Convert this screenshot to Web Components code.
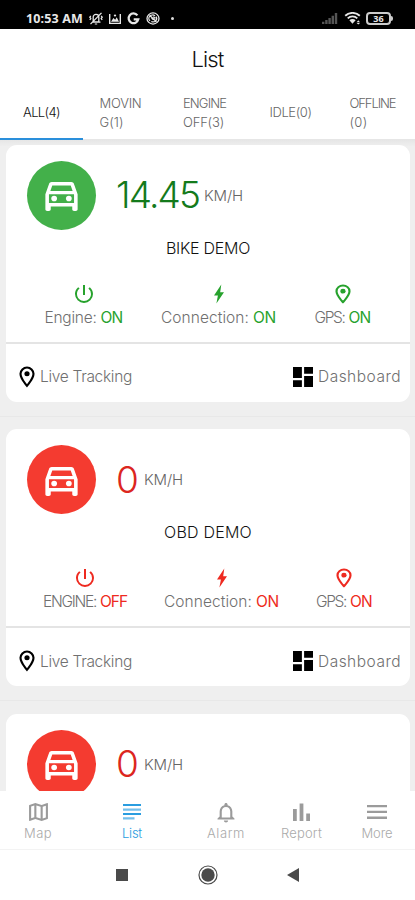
<!DOCTYPE html>
<html lang="en">
<head>
<meta charset="utf-8">
<title>List</title>
<style>
html,body{margin:0;height:100%}
body{width:415px;height:900px;overflow:hidden;background:#efefef;font-family:Inter,"Liberation Sans",sans-serif;font-weight:300}
</style>
</head>
<body>
<tracker-app></tracker-app>
<script>
const make = (name, html, setup) => customElements.define(name, class extends HTMLElement {
  connectedCallback() {
    if (this.shadowRoot) return;
    const t = document.createElement('template');
    t.innerHTML = typeof html === 'function' ? html(this) : html;
    this.attachShadow({mode: 'open'}).append(t.content.cloneNode(true));
    if (setup) setup(this);
  }
});
const attr = (el, n) => el.getAttribute(n) || '';

const icons = {
  car: ['0 0 24 24', '<path d="M18.92 5.01C18.72 4.42 18.16 4 17.5 4h-11c-.66 0-1.21.42-1.42 1.01L3 11v8.5c0 .55.45 1 1 1h1c.55 0 1-.45 1-1V18h12v1.5c0 .55.45 1 1 1h1c.55 0 1-.45 1-1V11l-2.08-5.99zM6.85 6h10.29l1.08 3.1H5.77L6.85 6zM19 16H5v-5h14v5z"/><circle cx="7.9" cy="13.4" r="1.6"/><circle cx="16.1" cy="13.4" r="1.6"/>'],
  power: ['2 2 20 20', '<path d="M13 3h-2v10h2V3zm4.83 2.17l-1.42 1.42A6.92 6.92 0 0 1 19 12c0 3.87-3.13 7-7 7s-7-3.13-7-7c0-2.19 1.01-4.14 2.58-5.42L6.17 5.17A8.93 8.93 0 0 0 3 12a9 9 0 0 0 18 0c0-2.74-1.23-5.18-3.17-6.83z"/>'],
  bolt: ['0 0 12 20', '<path d="M8.3 .6L1 11.4h3.9L3.4 19.4 11 8.2H7.2z"/>'],
  pin: ['4.6 1.5 14.8 21', '<path d="M12 2a7 7 0 0 0-7 7c0 5.25 7 13 7 13s7-7.75 7-13a7 7 0 0 0-7-7zM7 9a5 5 0 0 1 10 0c0 2.88-2.88 7.19-5 9.88C9.92 16.21 7 11.85 7 9z"/><circle cx="12" cy="9" r="2.4"/>'],
  dash: ['3 3 18 18', '<path d="M3 13h8V3H3v10zm0 8h8v-6H3v6zm10 0h8V11h-8v10zm0-18v6h8V3h-8z"/>'],
  map: ['2 2 20 20', '<path d="M20.5 3l-.16.03L15 5.1 9 3 3.36 4.9c-.21.07-.36.25-.36.48V20.5c0 .28.22.5.5.5l.16-.03L9 18.9l6 2.1 5.64-1.9c.21-.07.36-.25.36-.48V3.5c0-.28-.22-.5-.5-.5zM10 5.47l4 1.4v11.66l-4-1.4V5.47zm-5 .99l3-1.01v11.7l-3 1.16V6.46zm14 11.08l-3 1.01V6.86l3-1.16v11.84z"/>'],
  list: ['0 0 18 16', '<path d="M0 0h18v2H0zM0 9h18v2H0z"/><path opacity=".65" d="M0 4.5h18v2.2H0zM0 13.3h11.5v2.2H0z"/>'],
  bell: ['3.5 1.5 17 21', '<path d="M12 22c1.1 0 2-.9 2-2h-4c0 1.1.9 2 2 2zm6-6v-5c0-3.07-1.63-5.64-4.5-6.32V4c0-.83-.67-1.5-1.5-1.5s-1.5.67-1.5 1.5v.68C7.64 5.36 6 7.92 6 11v5l-2 2v1h16v-1l-2-2zm-2 1H8v-6c0-2.48 1.51-4.5 4-4.5s4 2.02 4 4.5v6z"/>'],
  chart: ['0 0 18 18', '<path d="M0 6h4v12H0zM7 .6h4V18H7zM14 10.5h4V18h-4z"/>'],
  menu: ['0 0 20 14', '<path d="M0 0h20v2.3H0zM0 5.8h20v2.3H0zM0 11.6h20v2.3H0z"/>'],
  mute: ['0 0 14 14', '<g fill="none" stroke="currentColor" stroke-width="1.3"><path d="M3 11h8.5M4.2 10.5V5.4C4.2 3.6 5.4 2.6 7 2.6s2.8 1 2.8 2.8v5.1zM5.8 12.9h2.4M1.8 4.2l-1 1.4 1 1.4-1 1.5M12.2 4.2l1 1.4-1 1.4 1 1.5M1.5 13L12.5 1"/></g>'],
  pic: ['0 0 12 12', '<path d="M0 1h1.4v9.6h9.2V1H12v11H0z"/><path d="M2 9.5l2.4-4 1.8 1.8 1.5-2.6 2.3 4.8z"/><circle cx="6" cy="2.7" r="1.2"/>'],
  goog: ['0 0 12 12', '<path d="M9.6 3.1A4.5 4.5 0 1 0 10.4 6.8H6.2" fill="none" stroke="currentColor" stroke-width="2.1"/>'],
  ring: ['0 0 14 14', '<g fill="none" stroke="currentColor" stroke-width="1.3"><circle cx="7" cy="7" r="6"/><path d="M4 9.5a3.6 3.6 0 0 1 5-5.3M10 5a3.6 3.6 0 0 1-4.7 5.2M3.5 3.5l7 7M5.5 6.5l2 2M7.3 5l2 2"/></g>'],
  signal: ['0 0 16 12', '<path d="M0 9.5h2.4V12H0zM3.2 7.6h2.4V12H3.2zM6.4 5.4h2.4V12H6.4zM9.6 3h2.4v9H9.6zM12.8 0h2.4v12h-2.4z"/>'],
  wifi: ['0 1 17 13.2', '<g fill="none" stroke="currentColor" stroke-width="1.8"><path d="M1.2 4.8a10.5 10.5 0 0 1 14.6 0M3.7 7.4a7 7 0 0 1 9.6 0"/></g><path d="M5.4 9.4a4.4 4.4 0 0 1 6.2 0L8.5 13z"/><path d="M12.6 11.5l1.7-2 1.7 2zM12.6 12.1l1.7 1.7 1.7-1.7z"/>'],
  square: ['0 0 12 12', '<path d="M0 0h12v12H0z"/>'],
  home: ['0 0 20 20', '<circle cx="10" cy="10" r="9" fill="none" stroke="currentColor" stroke-width="1.2"/><circle cx="10" cy="10" r="6.7"/>'],
  back: ['0 0 12 14', '<path d="M12 0v14L0 7z"/>']
};

make('ui-icon', el => `<style>:host{display:block;flex:none;width:${attr(el,'w')}px;height:${attr(el,'h')}px}svg{display:block;width:100%;height:100%;fill:currentColor}</style>
<svg viewBox="${icons[attr(el,'name')][0]}" preserveAspectRatio="none">${icons[attr(el,'name')][1]}</svg>`);

make('status-bar', `<style>
:host{display:flex;align-items:center;box-sizing:border-box;height:29px;padding:9px 22px 0 26px;background:#000;color:#e8e8e8;font-family:"Noto Sans",Roboto,sans-serif;font-weight:700;font-size:12.5px}
.sp{flex:1}.dot{width:3px;height:3px;border-radius:50%;background:#ddd;margin-left:11px}
ui-icon{margin-left:6px}.sig{color:#555}
.bat{flex:none;box-sizing:border-box;width:25px;height:13px;margin-left:5px;border:2px solid #ccc;border-radius:4px;display:grid;place-items:center;font-size:9px;line-height:8px}
.tip{flex:none;width:2px;height:5px;background:#ccc;border-radius:0 2px 2px 0}
</style>
<fit-text w="57">10:53 AM</fit-text><ui-icon name="mute" w="14" h="13"></ui-icon><ui-icon name="pic" w="12" h="11"></ui-icon><ui-icon name="goog" w="13" h="13"></ui-icon><ui-icon name="ring" w="14" h="13"></ui-icon><div class="dot"></div><div class="sp"></div>
<ui-icon class="sig" name="signal" w="16" h="11"></ui-icon><ui-icon name="wifi" w="17" h="13"></ui-icon><div class="bat">36</div><div class="tip"></div>`);

make('app-header', `<style>:host{display:grid;place-items:center;height:60px;background:#fff;color:#111;font-size:22px;font-weight:300}</style><fit-text w="32"><slot></slot></fit-text>`);

make('tab-item', `<style>:host{display:flex;flex-direction:column;justify-content:center;align-items:center;box-sizing:border-box;height:51px;color:#666;font-size:13px;line-height:19px;border-bottom:2px solid transparent}
:host([active]){border-color:#2a8fdb;color:#111}div{display:flex;flex-direction:column;align-items:flex-start;padding-bottom:1px}</style><div><slot></slot></div>`);
make('tab-bar', `<style>:host{display:grid;grid-template-columns:repeat(5,83px);height:50px;background:#fff;border-bottom:1px solid #e6e6e6}tab-item{height:50px}</style><slot></slot>`);

make('status-stat', el => `<style>:host{display:flex;flex-direction:column;align-items:center;font-size:15.5px;line-height:20px;color:#707070}
.i{height:24px;display:flex;align-items:center;color:var(--accent)}.r{display:flex;gap:4px;padding-top:2px}.v{color:var(--accent);font-weight:400}</style>
<div class="i"><ui-icon name="${attr(el,'icon')}" w="${attr(el,'iw')}" h="20"></ui-icon></div>
<div class="r"><fit-text w="${attr(el,'lw')}">${attr(el,'label')}</fit-text><fit-text class="v" w="${attr(el,'vw')}">${attr(el,'value')}</fit-text></div>`);

make('vehicle-card', el => `<style>
:host{display:block;width:404px;height:257px;background:#fff;border-radius:11px;overflow:hidden}
.top{display:flex;align-items:center;height:69px;padding:16px 0 0 21px}
.disc{display:grid;place-items:center;box-sizing:border-box;padding-top:2px;width:69px;height:69px;border-radius:50%;background:var(--disc);color:#fff}
.speed{margin-left:20px;font-size:37px;line-height:44px;color:var(--speed);font-weight:270}
.unit{margin-left:5px;font-size:15px;color:#666}
.name{display:grid;place-items:center;height:36px;color:#111;font-size:16px;font-weight:350}
.stats{display:flex;justify-content:space-evenly;height:60px;padding:16px 1px 0 0;border-bottom:2px solid #e4e4e4}
.links{display:flex;justify-content:space-between;align-items:center;height:64px;padding:1px 9px 0 13px;font-size:15.5px;color:#777}
.link{display:flex;align-items:center;gap:5px;color:#000}.link fit-text{color:#707070}
</style>
<div class="top"><div class="disc"><ui-icon name="car" w="43" h="42"></ui-icon></div>
<fit-text class="speed" w="${attr(el,'sw')}">${attr(el,'speed')}</fit-text><fit-text class="unit" w="39">KM/H</fit-text></div>
${el.hasAttribute('brief') ? '' : `<div class="name"><fit-text w="${attr(el,'nw')}">${attr(el,'name')}</fit-text></div>
<div class="stats"><slot></slot></div>
<div class="links"><div class="link"><ui-icon name="pin" w="16" h="22"></ui-icon><fit-text w="92">Live Tracking</fit-text></div>
<div class="link"><ui-icon name="dash" w="20" h="20"></ui-icon><fit-text w="83">Dashboard</fit-text></div></div>`}`);

make('vehicle-list', `<style>:host{display:block;height:652px;overflow:hidden;background:#efefef}
.flow{display:grid;justify-content:center;padding:5px 5px 0 6px;grid-auto-rows:284.5px}
::slotted(*){align-self:start}
.flow{background:linear-gradient(#e8e8e8,#e8e8e8) 0 276px/100% 1px no-repeat,linear-gradient(#e8e8e8,#e8e8e8) 0 560px/100% 1px no-repeat,linear-gradient(#e6e6e6,#eee) 0 0/100% 6px no-repeat}</style><div class="flow"><slot></slot></div>`);

make('nav-item', el => `<style>:host{display:flex;flex-direction:column;align-items:center;color:#9b9b9b;font-size:13px;line-height:18px;padding-top:9px}
:host([active]){color:#2a9de0}.i{height:24px;display:grid;place-items:center}fit-text{color:#aaa}:host([active]) fit-text{color:inherit}</style>
<div class="i"><ui-icon name="${attr(el,'icon')}" w="${attr(el,'iw')}" h="${attr(el,'ih')}"></ui-icon></div><fit-text w="${attr(el,'tw')}"><slot></slot></fit-text>`);
make('bottom-nav', `<style>:host{display:grid;grid-template-columns:76px 112px 76px 75px 76px;height:58px;background:#fff;border-bottom:1px solid #f3f3f3}</style><slot></slot>`);
make('system-nav', `<style>:host{display:grid;grid-template-columns:86px 86px 84px;justify-content:center;justify-items:center;align-items:center;height:50px;padding-right:2px;background:#fff;color:#4a4a4a}</style>
<ui-icon name="square" w="12" h="12"></ui-icon><ui-icon name="home" w="20" h="20"></ui-icon><ui-icon name="back" w="12" h="14"></ui-icon>`);

const common = `<status-stat icon="bolt" iw="12" label="Connection:" lw="88" value="ON" vw="23"></status-stat><status-stat icon="pin" iw="16" label="GPS:" lw="30" value="ON" vw="22"></status-stat>`;
const engineOff = `<status-stat icon="power" iw="20" label="ENGINE:" lw="53" value="OFF" vw="27"></status-stat>`;
make('tracker-app', `<style>:host{display:flex;flex-direction:column;height:900px}
.green{--disc:#43b04a;--speed:#147a1c;--accent:#27a22d}.red{--disc:#f43b30;--speed:#dc2620;--accent:#ee2a20}</style>
<status-bar></status-bar><app-header>List</app-header>
<tab-bar><tab-item active><fit-text w="37">ALL(4)</fit-text></tab-item>
<tab-item style="padding-right:8px"><fit-text w="42">MOVIN</fit-text><fit-text w="24">G(1)</fit-text></tab-item>
<tab-item style="padding-right:6px"><fit-text w="43">ENGINE</fit-text><fit-text w="41">OFF(3)</fit-text></tab-item>
<tab-item><fit-text w="42">IDLE(0)</fit-text></tab-item>
<tab-item style="padding-right:2px"><fit-text w="46">OFFLINE</fit-text><fit-text w="18">(0)</fit-text></tab-item></tab-bar>
<vehicle-list><vehicle-card class="green" speed="14.45" sw="83" name="BIKE DEMO" nw="84"><status-stat icon="power" iw="20" label="Engine:" lw="52" value="ON" vw="22"></status-stat>${common}</vehicle-card>
<vehicle-card class="red" speed="0" sw="23" name="OBD DEMO" nw="88">${engineOff}${common}</vehicle-card>
<vehicle-card class="red" brief speed="0" sw="23"></vehicle-card></vehicle-list>
<bottom-nav><nav-item icon="map" iw="21" ih="20" tw="28">Map</nav-item><nav-item active icon="list" iw="18" ih="16" tw="20">List</nav-item><nav-item icon="bell" iw="18" ih="21" tw="38">Alarm</nav-item><nav-item icon="chart" iw="17" ih="18" tw="41">Report</nav-item><nav-item icon="menu" iw="20" ih="14" tw="31">More</nav-item></bottom-nav>
<system-nav></system-nav>`);

/* Text whose tracking is adjusted so that it takes the width given in "w". */
make('fit-text', `<style>:host{display:block;white-space:nowrap}span{display:inline-block}</style><span><slot></slot></span>`, el => {
  const s = el.shadowRoot.querySelector('span'), w = +attr(el, 'w');
  let n = el.textContent.trim().length;
  const inner = el.querySelector('slot');
  if (inner) n = inner.assignedNodes().map(x => x.textContent).join('').trim().length;
  const natural = s.getBoundingClientRect().width;
  if (w && n) { s.style.letterSpacing = (w - natural) / n + 'px'; el.style.width = w + 'px'; }
});
</script>
</body>
</html>
